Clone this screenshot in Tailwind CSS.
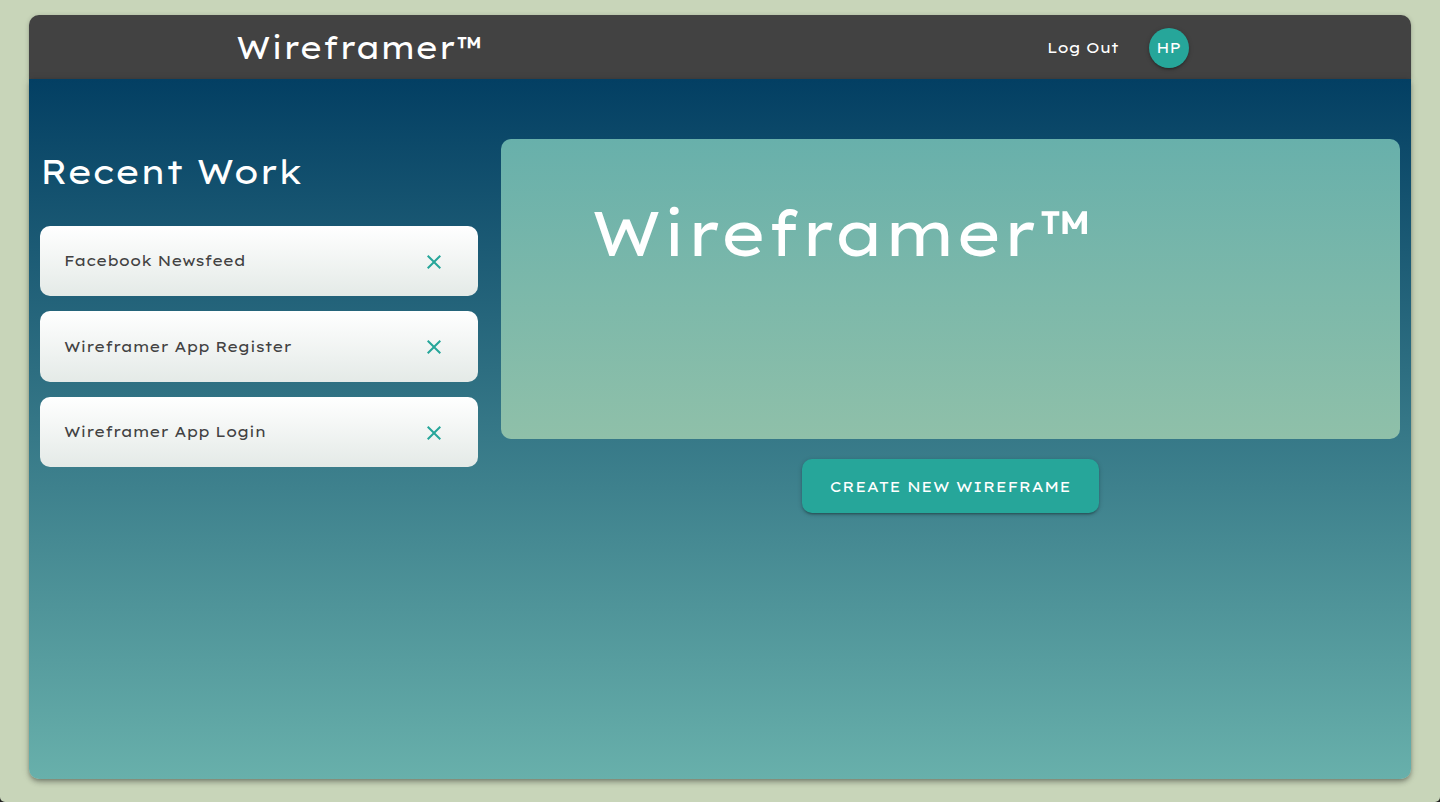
<!DOCTYPE html>
<html lang="en">
<head>
<meta charset="utf-8">
<title>Wireframer</title>
<script src="https://cdn.jsdelivr.net/npm/@tailwindcss/browser@4"></script>
</head>
<body class="h-[802px] overflow-hidden bg-[#222] font-['Lexend_Exa',Inter,sans-serif]">
<div class="h-full rounded-b-[5px] bg-[#c8d5b9] px-[29px] pt-[15px]">
  <header class="flex h-16 items-center justify-between rounded-t-[10px] bg-[#424242] pr-[222px] pl-[207px] text-white shadow-[0_2px_2px_0_rgba(0,0,0,0.14),0_3px_1px_-2px_rgba(0,0,0,0.12),0_1px_5px_0_rgba(0,0,0,0.2)]">
    <a class="pt-0.5 text-[31.5px] whitespace-nowrap">Wireframer™</a>
    <nav class="flex items-center gap-[30px] pt-0.5">
      <a class="text-[15px]">Log Out</a>
      <span class="flex size-10 items-center justify-center rounded-full bg-[#26a69a] pr-px text-[15px] shadow-[0_2px_2px_0_rgba(0,0,0,0.14),0_3px_1px_-2px_rgba(0,0,0,0.12),0_1px_5px_0_rgba(0,0,0,0.2)]">HP</span>
    </nav>
  </header>
  <main class="relative flex h-[700px] rounded-b-[10px] bg-linear-to-b/srgb from-[#033f63] to-[#68b0ab] pt-[60px] pl-[11px] shadow-[0_4px_5px_0_rgba(0,0,0,0.14),0_1px_10px_0_rgba(0,0,0,0.12),0_2px_4px_-1px_rgba(0,0,0,0.3)]">
    <section class="w-[438px]">
      <h1 class="h-[87px] pt-[10px] text-[34.2px] leading-[46px] whitespace-nowrap text-white">Recent Work</h1>
      <ul class="flex flex-col gap-[15px] text-[15px] text-[#424242]">
        <li class="flex h-[70px] items-center justify-between rounded-[10px] bg-linear-to-b/srgb from-white to-[#e4eae7] pr-[37px] pl-[24px]"><span>Facebook Newsfeed</span><svg class="mt-[2px] size-[14px]" viewBox="0 0 14 14"><path d="M14 1.41 12.59 0 7 5.59 1.41 0 0 1.41 5.59 7 0 12.59 1.41 14 7 8.41 12.59 14 14 12.59 8.41 7z" fill="#26a69a"/></svg></li>
        <li class="flex h-[71px] items-center justify-between rounded-[10px] bg-linear-to-b/srgb from-white to-[#e4eae7] pr-[37px] pl-[24px]"><span class="pt-px">Wireframer App Register</span><svg class="mt-px size-[14px]" viewBox="0 0 14 14"><path d="M14 1.41 12.59 0 7 5.59 1.41 0 0 1.41 5.59 7 0 12.59 1.41 14 7 8.41 12.59 14 14 12.59 8.41 7z" fill="#26a69a"/></svg></li>
        <li class="flex h-[70px] items-center justify-between rounded-[10px] bg-linear-to-b/srgb from-white to-[#e4eae7] pr-[37px] pl-[24px]"><span>Wireframer App Login</span><svg class="mt-[2px] size-[14px]" viewBox="0 0 14 14"><path d="M14 1.41 12.59 0 7 5.59 1.41 0 0 1.41 5.59 7 0 12.59 1.41 14 7 8.41 12.59 14 14 12.59 8.41 7z" fill="#26a69a"/></svg></li>
      </ul>
    </section>
    <section class="ml-[23px] flex w-[899px] flex-col items-center gap-5">
      <div class="h-[300px] w-full rounded-[10px] bg-linear-to-b/srgb from-[#68b0ab] to-[#8fc0a9] pt-[53px] pl-[90px]">
        <h2 class="text-[64px] leading-[80px] whitespace-nowrap text-white">Wireframer™</h2>
      </div>
      <button class="flex h-[54px] w-[297px] items-center justify-center rounded-[10px] bg-[#26a69a] pt-0.5 text-[15px] tracking-[0.5px] text-white shadow-[0_2px_2px_0_rgba(0,0,0,0.14),0_3px_1px_-2px_rgba(0,0,0,0.12),0_1px_5px_0_rgba(0,0,0,0.2)]">CREATE NEW WIREFRAME</button>
    </section>
  </main>
</div>
</body>
</html>
